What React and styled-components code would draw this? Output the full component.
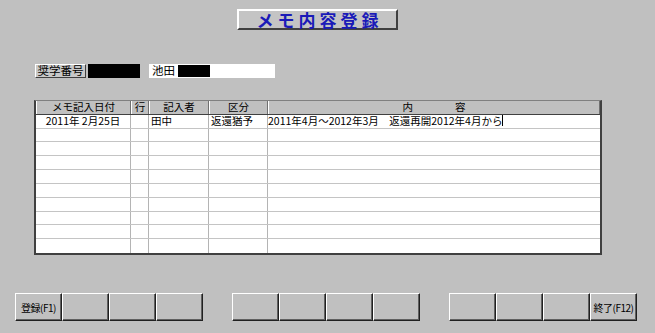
import React from "react"
import styled, { createGlobalStyle } from "styled-components"

const GlobalStyle = createGlobalStyle`
  html, body {
    margin: 0;
    padding: 0;
    background: #c0c0c0;
  }
  body {
    font-family: "Noto Sans CJK JP", "Liberation Sans", sans-serif;
  }
`

const Screen = styled.div`
  width: 655px;
  height: 333px;
  background: #c0c0c0;
  box-sizing: border-box;
  display: flex;
  flex-direction: column;
  overflow: hidden;
`

const TitleBox = styled.div`
  margin: 9px 0 0 237px;
  width: 161px;
  height: 21px;
  box-sizing: border-box;
  border-top: 2px solid #ffffff;
  border-left: 2px solid #ffffff;
  border-right: 2px solid #404040;
  border-bottom: 2px solid #404040;
  background: #c4c4c4;
  color: #1a1ab8;
  font-size: 17px;
  font-weight: bold;
  letter-spacing: 4px;
  padding-left: 4px;
  display: flex;
  align-items: center;
  justify-content: center;
  line-height: 1;
`

const InfoRow = styled.div`
  margin: 34px 0 0 35px;
  height: 14px;
  display: flex;
  align-items: stretch;
`

const LabelButton = styled.div`
  width: 51px;
  box-sizing: border-box;
  border-top: 1px solid #ffffff;
  border-left: 1px solid #ffffff;
  border-right: 1px solid #404040;
  border-bottom: 1px solid #404040;
  background: #c8c8c8;
  font-size: 11.5px;
  display: flex;
  align-items: center;
  justify-content: center;
  line-height: 1;
`

const Field = styled.div`
  width: ${p => p.w}px;
  margin-left: ${p => p.gap}px;
  background: #ffffff;
  display: flex;
  align-items: center;
  padding-left: ${p => p.pad || 0}px;
  box-sizing: border-box;
  font-size: 11.5px;
  line-height: 1;
`

const Masked = styled.span`
  display: inline-block;
  width: ${p => p.w}px;
  height: 12px;
  background: #000000;
  margin-left: ${p => p.ml || 0}px;
`

const Grid = styled.div`
  margin: 22px 0 0 34px;
  width: 568px;
  height: 155px;
  box-sizing: border-box;
  border-left: 2px solid #404040;
  border-top: 1px solid #808080;
  border-right: 2px solid #404040;
  border-bottom: 2px solid #404040;
  background: #ffffff;
  display: flex;
  flex-direction: column;
`

const cols = "95px 18px 60px 59px 1fr"

const HeadRow = styled.div`
  display: grid;
  grid-template-columns: ${cols};
  height: 13px;
  background: #c0c0c0;
  border-bottom: 1px solid #404040;
`

const HeadCell = styled.div`
  border-left: 1px solid #ffffff;
  border-right: 1px solid #707070;
  font-size: 10.5px;
  line-height: 12px;
  text-align: center;
  white-space: pre;
`

const BodyRow = styled.div`
  display: grid;
  grid-template-columns: ${cols};
  height: 14px;
  box-sizing: border-box;
  border-bottom: 1px solid #c4c4c4;
  &:last-child {
    border-bottom: none;
  }
`

const Cell = styled.div`
  border-right: 1px solid #b4b4b4;
  font-size: 10.5px;
  line-height: 12px;
  padding-left: ${p => (p.center ? 0 : 2)}px;
  text-align: ${p => (p.center ? "center" : "left")};
  white-space: nowrap;
  &:last-child {
    border-right: none;
    padding-left: 0;
  }
`

const Caret = styled.span`
  display: inline-block;
  width: 1px;
  height: 11px;
  background: #000;
  vertical-align: -1px;
`

const Footer = styled.div`
  margin: 38px 0 0 15px;
  display: flex;
  gap: 29px;
`

const KeyGroup = styled.div`
  display: flex;
`

const Key = styled.div`
  width: 47px;
  height: 28px;
  box-sizing: border-box;
  border: 1px solid #202020;
  border-top-color: #ffffff;
  border-left-color: #ffffff;
  box-shadow: inset -1px -1px 0 #606060;
  background: #c0c0c0;
  font-size: 10px;
  display: flex;
  align-items: center;
  justify-content: center;
  white-space: nowrap;
  letter-spacing: -0.5px;
`

const rows = [
  { date: "2011年 2月25日", line: "", who: "田中", kind: "返還猶予", text: "2011年4月～2012年3月\u3000返還再開2012年4月から" },
]
while (rows.length < 10) rows.push(null)

const groups = [
  ["登録(F1)", "", "", ""],
  ["", "", "", ""],
  ["", "", "", "終了(F12)"],
]

const App = () => {
  return (
    <Screen>
      <GlobalStyle />
      <TitleBox>メモ内容登録</TitleBox>
      <InfoRow>
        <LabelButton>奨学番号</LabelButton>
        <Masked w={52} ml={2} style={{ height: 14 }} />
        <Field w={126} gap={9} pad={3}>
          池田
          <Masked w={32} ml={3} />
        </Field>
      </InfoRow>
      <Grid>
        <HeadRow>
          <HeadCell>メモ記入日付</HeadCell>
          <HeadCell>行</HeadCell>
          <HeadCell>記入者</HeadCell>
          <HeadCell>区分</HeadCell>
          <HeadCell>{"内\u3000\u3000\u3000\u3000容"}</HeadCell>
        </HeadRow>
        {rows.map((r, i) => (
          <BodyRow key={i}>
            <Cell center>{r ? r.date : ""}</Cell>
            <Cell>{r ? r.line : ""}</Cell>
            <Cell>{r ? r.who : ""}</Cell>
            <Cell>{r ? r.kind : ""}</Cell>
            <Cell>
              {r ? r.text : ""}
              {r && <Caret />}
            </Cell>
          </BodyRow>
        ))}
      </Grid>
      <Footer>
        {groups.map((g, gi) => (
          <KeyGroup key={gi}>
            {g.map((label, ki) => (
              <Key key={ki}>{label}</Key>
            ))}
          </KeyGroup>
        ))}
      </Footer>
    </Screen>
  )
}

export default App
